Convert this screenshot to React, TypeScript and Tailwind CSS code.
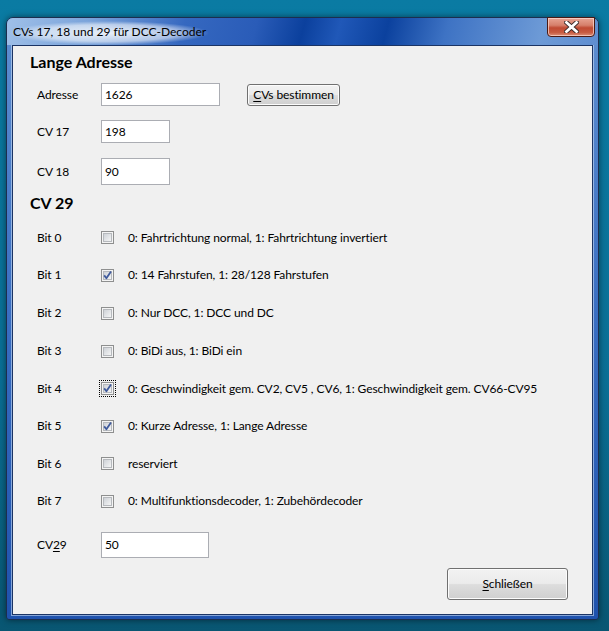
import React from 'react';

const bits = [
  { label: 'Bit 0', text: '0: Fahrtrichtung normal, 1: Fahrtrichtung invertiert', checked: false, h: 'h-[37px]' },
  { label: 'Bit 1', text: '0: 14 Fahrstufen, 1: 28/128 Fahrstufen', checked: true, h: 'h-[38px]' },
  { label: 'Bit 2', text: '0: Nur DCC, 1: DCC und DC', checked: false, h: 'h-[38px]' },
  { label: 'Bit 3', text: '0: BiDi aus, 1: BiDi ein', checked: false, h: 'h-[38px]' },
  { label: 'Bit 4', text: '0: Geschwindigkeit gem. CV2, CV5 , CV6, 1: Geschwindigkeit gem. CV66-CV95', checked: true, h: 'h-[37px]', focus: true },
  { label: 'Bit 5', text: '0: Kurze Adresse, 1: Lange Adresse', checked: true, h: 'h-[38px]' },
  { label: 'Bit 6', text: 'reserviert', checked: false, h: 'h-[37px]' },
  { label: 'Bit 7', text: '0: Multifunktionsdecoder, 1: Zubehördecoder', checked: false, h: 'h-[38px]' },
];

function CheckBox({ checked, focus }: { checked: boolean; focus?: boolean }) {
  return (
    <div className={focus ? 'p-px outline outline-1 outline-dotted outline-black -m-px' : ''}>
      <svg width="13" height="13" viewBox="0 0 13 13" className="block">
        <defs>
          <linearGradient id="cbfill" x1="0" y1="0" x2="1" y2="1">
            <stop offset="0" stopColor="#cbcfd5" />
            <stop offset="1" stopColor="#f7f7f7" />
          </linearGradient>
        </defs>
        <rect x="0.5" y="0.5" width="12" height="12" fill="#f4f4f4" stroke="#8e8f8f" />
        <rect x="2.5" y="2.5" width="8" height="8" fill="url(#cbfill)" stroke="#b6b9bd" />
        {checked && (
          <path d="M3.2 6.4 L5.4 9.2 L10 2.6" fill="none" stroke="#3f5a9c" strokeWidth="1.8" strokeLinejoin="round" />
        )}
      </svg>
    </div>
  );
}

function WinButton({ children, className }: { children: React.ReactNode; className: string }) {
  return (
    <div
      className={`flex items-center justify-center rounded-[3px] border border-[#707070] bg-[linear-gradient(to_bottom,#f2f2f2_0%,#ebebeb_48%,#dddddd_52%,#cfcfcf_100%)] shadow-[inset_0_0_0_1px_#fcfcfc] text-black ${className}`}
    >
      {children}
    </div>
  );
}

function TextBox({ value, className }: { value: string; className: string }) {
  return (
    <div className={`flex items-center border border-[#abadb3] bg-white pl-[3px] text-black ${className}`}>
      {value}
    </div>
  );
}

export default function App() {
  return (
    <div className="w-[609px] h-[631px] overflow-hidden bg-[linear-gradient(to_bottom,#0a7ba3_0%,#0a6f95_60%,#095672_100%)] pt-[17px] pl-[6px] font-['Lato',sans-serif] text-[12px] tracking-[-0.1px]">
      {/* window frame */}
      <div className="w-[593px] h-[603px] rounded-t-[7px] rounded-b-[3px] border border-[#1b2e4e] bg-[linear-gradient(to_bottom,#5f8fd0_0%,#3a6ec2_50%,#1f52ad_100%)] flex flex-col shadow-[0_0_6px_rgba(0,0,0,0.5)]">
        {/* title bar */}
        <div className="relative h-[27px] shrink-0 rounded-t-[6px] bg-[linear-gradient(105deg,#9fc0e8_0%,#7aa3da_14%,#3568c0_30%,#2a5cb8_42%,#0b409d_50%,#2058b8_56%,#0b419e_64%,#3e73c4_74%,#6d9ad6_90%,#5f8ed0_100%)]">
          <div className="absolute left-[2px] top-[3px] h-[24px] w-[200px] rounded-full bg-[radial-gradient(closest-side,rgba(255,255,255,0.85),rgba(255,255,255,0.55)_70%,rgba(255,255,255,0))]" />
          <div className="absolute left-[6px] top-[6px] text-[12px] leading-[16px] tracking-normal text-black">
            CVs 17, 18 und 29 für DCC-Decoder
          </div>
          {/* close button */}
          <div className="absolute right-[3px] -top-px h-[20px] w-[48px] rounded-b-[4px] border border-[#4a1a14] bg-[linear-gradient(to_bottom,#e8a493_0%,#d6806c_40%,#c04a33_55%,#c75b41_80%,#dd8f78_100%)] shadow-[inset_0_0_0_1px_rgba(255,220,210,0.7)] flex items-center justify-center">
            <svg width="15" height="12" viewBox="0 0 15 12">
              <path d="M2.5 1.5 L12.5 10.5 M12.5 1.5 L2.5 10.5" stroke="#3a2a2a" strokeWidth="4.6" strokeLinecap="square" />
              <path d="M2.5 1.5 L12.5 10.5 M12.5 1.5 L2.5 10.5" stroke="#ffffff" strokeWidth="2.8" strokeLinecap="square" />
            </svg>
          </div>
        </div>

        {/* client area */}
        <div className="mx-[5px] mb-[4px] flex-1 border border-[#1b3464] bg-[#f0f0f0] shadow-[0_0_0_1px_rgba(200,220,245,0.6)] flex flex-col text-black">
          <div className="ml-[17px] mt-[6px] h-[20px] text-[16px] leading-[20px] font-bold tracking-normal">Lange Adresse</div>

          <div className="mt-[11px] flex h-[23px] items-center">
            <div className="w-[88px] pl-[24px]">Adresse</div>
            <TextBox value="1626" className="h-[23px] w-[119px]" />
            <WinButton className="ml-[27px] h-[22px] w-[93px] border-[#3c3c3c]">
              <span>
                <span className="underline underline-offset-2">C</span>Vs bestimmen
              </span>
            </WinButton>
          </div>

          <div className="mt-[14px] flex h-[23px] items-center">
            <div className="w-[88px] pl-[24px]">CV 17</div>
            <TextBox value="198" className="h-[23px] w-[69px]" />
          </div>

          <div className="mt-[15px] flex h-[27px] items-center">
            <div className="w-[88px] pl-[24px]">CV 18</div>
            <TextBox value="90" className="h-[27px] w-[69px]" />
          </div>

          <div className="ml-[17px] mt-[8px] h-[20px] text-[16px] leading-[20px] font-bold tracking-normal">CV 29</div>

          <div className="mt-[6px] flex flex-col">
            {bits.map((b) => (
              <div key={b.label} className={`flex items-center ${b.h}`}>
                <div className="w-[88px] pl-[24px]">{b.label}</div>
                <CheckBox checked={b.checked} focus={b.focus} />
                <div className="ml-[14px]">{b.text}</div>
              </div>
            ))}
          </div>

          <div className="mt-[12px] flex h-[26px] items-center">
            <div className="w-[88px] pl-[24px]">
              CV<span className="underline underline-offset-2">2</span>9
            </div>
            <TextBox value="50" className="h-[26px] w-[108px]" />
          </div>

          <div className="mt-[10px] flex justify-end pr-[24px]">
            <WinButton className="h-[32px] w-[121px]">
              <span>
                <span className="underline underline-offset-2">S</span>chließen
              </span>
            </WinButton>
          </div>
        </div>
      </div>
    </div>
  );
}
